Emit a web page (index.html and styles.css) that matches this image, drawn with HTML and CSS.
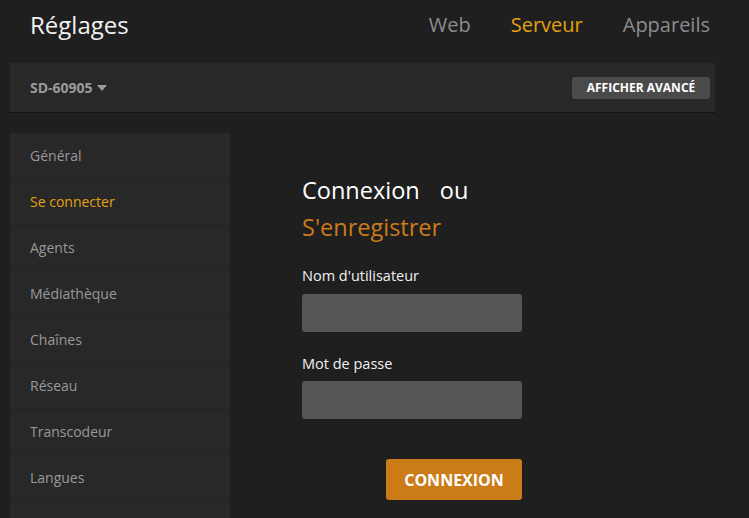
FILE: index.html
```html
<!DOCTYPE html>
<html lang="fr">
<head>
<meta charset="utf-8">
<title>Réglages</title>
<link rel="stylesheet" href="styles.css">
</head>
<body>
<header class="topbar">
  <h1 class="title">Réglages</h1>
  <nav class="tabs">
    <a class="tab">Web</a>
    <a class="tab active">Serveur</a>
    <a class="tab">Appareils</a>
  </nav>
</header>
<div class="subbar">
  <div class="server">SD-60905 <span class="caret"></span></div>
  <button class="adv">AFFICHER AVANCÉ</button>
</div>
<div class="main">
  <ul class="side">
    <li>Général</li>
    <li class="active">Se connecter</li>
    <li>Agents</li>
    <li>Médiathèque</li>
    <li>Chaînes</li>
    <li>Réseau</li>
    <li>Transcodeur</li>
    <li>Langues</li>
    <li class="rest"></li>
  </ul>
  <form class="login">
    <h2 class="heading"><span class="con">Connexion</span>ou<br><span class="reg">S'enregistrer</span></h2>
    <label class="lbl">Nom d'utilisateur</label>
    <div class="input"></div>
    <label class="lbl lbl2">Mot de passe</label>
    <div class="input in2"></div>
    <div class="actions"><button type="button" class="submit">CONNEXION</button></div>
  </form>
</div>
</body>
</html>
```
FILE: styles.css
```css
html, body {
  margin: 0;
  padding: 0;
  background: #1f1f1f;
  font-family: "Open Sans", "Noto Sans", sans-serif;
  height: 518px;
  overflow: hidden;
}
.topbar {
  height: 63px;
  display: flex;
  align-items: center;
  justify-content: space-between;
  padding: 0 39px 0 30px;
  box-sizing: border-box;
}
.title {
  margin: 0;
  font-weight: 400;
  font-size: 24px;
  color: #f2f2f2;
  line-height: 1;
  position: relative;
  top: -7px;
}
.tabs {
  display: flex;
  gap: 40px;
}
.tab {
  font-size: 20px;
  color: #8a8d90;
  line-height: 1;
  position: relative;
  top: -7px;
}
.tab.active { color: #e5a00d; }
.subbar {
  margin: 0 34px 0 10px;
  height: 49px;
  background: #282828;
  border-bottom: 1px solid #111;
  display: flex;
  align-items: center;
  justify-content: space-between;
  padding: 0 5px 0 20px;
}
.server {
  font-size: 14px;
  font-weight: 700;
  color: #9a9a9a;
  display: flex;
  align-items: center;
  gap: 4px;
}
.caret {
  width: 0; height: 0;
  border-left: 5px solid transparent;
  border-right: 5px solid transparent;
  border-top: 6px solid #9a9a9a;
  margin-top: 1px;
}
.adv {
  height: 22px;
  width: 138px;
  border: 0;
  border-radius: 3px;
  background: #4a4a4a;
  color: #fff;
  font-family: "Open Sans", sans-serif;
  font-weight: 700;
  font-size: 12px;
  padding: 0;
}
.main {
  display: flex;
  margin-top: 20px;
}
.side {
  list-style: none;
  margin: 0 0 0 10px;
  padding: 0;
  width: 220px;
  background: #282828;
}
.side li {
  height: 46px;
  box-sizing: border-box;
  border-bottom: 1px solid #232323;
  display: flex;
  align-items: center;
  padding-left: 20px;
  font-size: 14px;
  color: #999;
}
.side li.rest { height: 18px; border-bottom: 0; }
.side li.active { color: #e5a00d; }
.login {
  margin-left: 72px;
  padding-top: 39px;
  width: 220px;
}
.heading {
  margin: 0;
  font-weight: 400;
  font-size: 23.5px;
  line-height: 37px;
  color: #fff;
  white-space: nowrap;
}
.con { margin-right: 20px; }
.reg { color: #cc7b19; }
.lbl {
  display: block;
  margin-top: 20px;
  font-size: 14.5px;
  line-height: 20px;
  color: #f0f0f0;
}
.lbl2 { margin-top: 22px; }
.input {
  margin-top: 8px;
  height: 38px;
  background: #555;
  border-radius: 3px;
}
.in2 { margin-top: 7px; }
.actions {
  display: flex;
  justify-content: flex-end;
  margin-top: 40px;
}
.submit {
  width: 136px;
  height: 41px;
  border: 0;
  border-radius: 3px;
  background: #cc7b19;
  color: #fff;
  font-family: "Open Sans", sans-serif;
  font-weight: 700;
  font-size: 16px;
  padding: 0;
}
```
